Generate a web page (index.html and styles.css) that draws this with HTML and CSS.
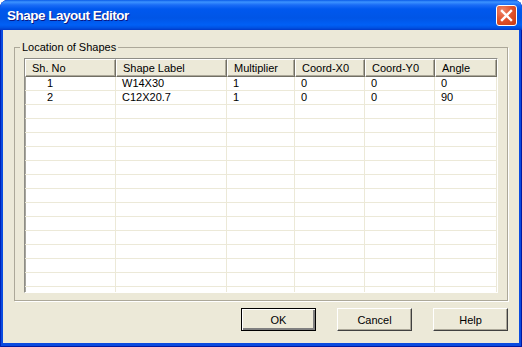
FILE: index.html
```html
<!DOCTYPE html>
<html lang="en">
<head>
    <meta charset="UTF-8">
    <title>Shape Layout Editor</title>
    <link rel="stylesheet" href="styles.css">
</head>
<body>

<div class="window">
    <div class="titlebar">
        <span class="title">Shape Layout Editor</span>
        <button class="close" title="Close">
            <svg width="21" height="21" viewBox="0 0 21 21">
                <path d="M6 6 L15 15 M15 6 L6 15" stroke="#fff" stroke-width="2.4" stroke-linecap="square"/>
            </svg>
        </button>
    </div>

    <div class="client">
        <fieldset class="group">
            <legend>Location of Shapes</legend>
            <div class="grid">
                <table>
                    <colgroup>
                        <col class="c-no">
                        <col class="c-label">
                        <col class="c-mult">
                        <col class="c-x">
                        <col class="c-y">
                        <col class="c-angle">
                    </colgroup>
                    <thead>
                        <tr>
                            <th>Sh. No</th>
                            <th>Shape Label</th>
                            <th>Multiplier</th>
                            <th>Coord-X0</th>
                            <th>Coord-Y0</th>
                            <th>Angle</th>
                        </tr>
                    </thead>
                    <tbody>
                        <tr><td>1</td><td>W14X30</td><td>1</td><td>0</td><td>0</td><td>0</td></tr>
                        <tr><td>2</td><td>C12X20.7</td><td>1</td><td>0</td><td>0</td><td>90</td></tr>
                        <tr><td></td><td></td><td></td><td></td><td></td><td></td></tr>
                        <tr><td></td><td></td><td></td><td></td><td></td><td></td></tr>
                        <tr><td></td><td></td><td></td><td></td><td></td><td></td></tr>
                        <tr><td></td><td></td><td></td><td></td><td></td><td></td></tr>
                        <tr><td></td><td></td><td></td><td></td><td></td><td></td></tr>
                        <tr><td></td><td></td><td></td><td></td><td></td><td></td></tr>
                        <tr><td></td><td></td><td></td><td></td><td></td><td></td></tr>
                        <tr><td></td><td></td><td></td><td></td><td></td><td></td></tr>
                        <tr><td></td><td></td><td></td><td></td><td></td><td></td></tr>
                        <tr><td></td><td></td><td></td><td></td><td></td><td></td></tr>
                        <tr><td></td><td></td><td></td><td></td><td></td><td></td></tr>
                        <tr><td></td><td></td><td></td><td></td><td></td><td></td></tr>
                        <tr><td></td><td></td><td></td><td></td><td></td><td></td></tr>
                        <tr><td></td><td></td><td></td><td></td><td></td><td></td></tr>
                        <tr><td></td><td></td><td></td><td></td><td></td><td></td></tr>
                    </tbody>
                </table>
            </div>
        </fieldset>

        <div class="buttons">
            <button class="btn default">OK</button>
            <button class="btn">Cancel</button>
            <button class="btn">Help</button>
        </div>
    </div>
</div>

</body>
</html>
```

FILE: styles.css
```css
body {
    margin: 0;
    background-color: #fff;
    font-family: "Liberation Sans", Arial, sans-serif;
    font-size: 11px;
    color: #000;
}
.window {
    width: 522px;
    height: 347px;
    display: flex;
    flex-direction: column;
    background-color: #0A4BE0;
    border-radius: 8px 8px 0 0;
    box-shadow: inset 1px 0 #0022B8, inset -1px 0 #0019A0, inset 0 -1px #0019A0;
}
.titlebar {
    height: 30px;
    display: flex;
    align-items: center;
    padding: 0 5px 0 7px;
    border-radius: 8px 8px 0 0;
    background: linear-gradient(to bottom, #0A5BE8 0, #3C93FF 2px, #1A6CF6 5px, #0058EE 9px, #0055E6 18px, #0060F6 25px, #0050E0 28px, #0038C8 30px);
}
.title {
    flex: 1;
    color: #fff;
    font-weight: bold;
    font-size: 13.5px;
    letter-spacing: -0.5px;
    text-shadow: 1px 1px #0A1883;
}
.close {
    width: 21px;
    height: 21px;
    padding: 0;
    border: 1px solid #fff;
    border-radius: 3px;
    background: radial-gradient(circle at 30% 25%, #F0876A 0, #E1542E 45%, #C9390F 100%);
    display: flex;
    align-items: center;
    justify-content: center;
    box-sizing: border-box;
}
.close svg {
    display: block;
    margin: -1px;
}
.client {
    flex: 1;
    margin: 0 3px 4px;
    background-color: #ECE9D8;
    display: flex;
    flex-direction: column;
}
.group {
    margin: 11px 11px 0;
    padding: 4px 9px 7px;
    border: 1px solid #ACA899;
    box-shadow: 1px 1px 0 #fff;
    min-width: 0;
}
.group legend {
    margin-left: -4px;
    padding: 0 2px;
    line-height: 13px;
}
.grid {
    height: 233px;
    overflow: hidden;
    background-color: #fff;
    border: 1px solid;
    border-color: #8E8D86 #fff #fff #8E8D86;
    box-shadow: inset 1px 0 #A7A69E;
}
table {
    width: 100%;
    table-layout: fixed;
    border-collapse: separate;
    border-spacing: 0;
}
.c-no { width: 91px; }
.c-label { width: 111px; }
.c-mult { width: 68px; }
.c-x { width: 70px; }
.c-y { width: 70px; }
th {
    height: 18px;
    box-sizing: border-box;
    padding: 0 6px;
    text-align: left;
    font-weight: normal;
    background-color: #ECE9D8;
    border-top: 1px solid #fff;
    border-left: 1px solid #fff;
    border-right: 1px solid #716F64;
    border-bottom: 1px solid #716F64;
    box-shadow: inset -1px -1px #ACA899;
    white-space: nowrap;
    overflow: hidden;
}
td {
    height: 14px;
    box-sizing: border-box;
    padding: 0 6px;
    line-height: 13px;
    border-right: 1px solid #ECE9D8;
    border-bottom: 1px solid #ECE9D8;
    white-space: nowrap;
    overflow: hidden;
}
td:first-child {
    padding-left: 22px;
}
.buttons {
    display: flex;
    justify-content: flex-end;
    gap: 21px;
    margin: 7px 11px 0;
}
.btn {
    width: 75px;
    height: 23px;
    padding: 0;
    font: inherit;
    color: #000;
    background-color: #ECE9D8;
    border: 1px solid;
    border-color: #fff #404040 #404040 #fff;
    box-shadow: inset -1px -1px #ACA899;
}
.btn.default {
    border-color: #000;
    box-shadow: inset 1px 1px #fff, inset -2px -2px #808080;
}
```
